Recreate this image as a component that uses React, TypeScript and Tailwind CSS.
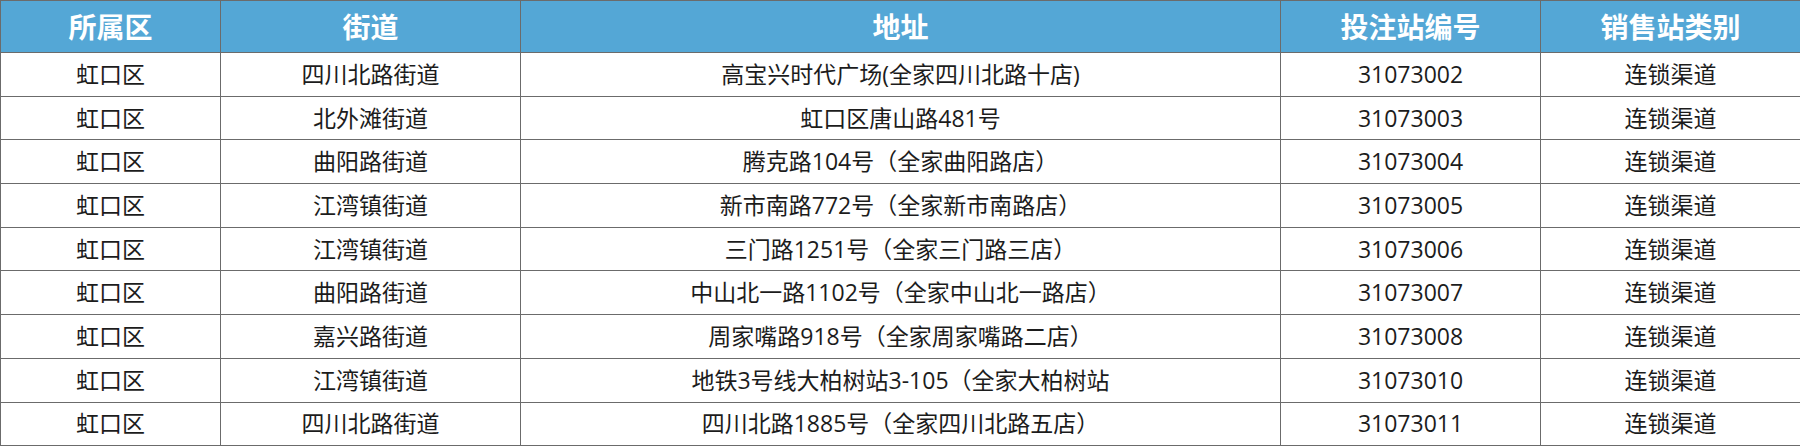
import React from 'react';

interface Store {
  district: string;
  street: string;
  address: string;
  code: string;
  type: string;
}

const stores: Store[] = [
  { district: '虹口区', street: '四川北路街道', address: '高宝兴时代广场(全家四川北路十店)', code: '31073002', type: '连锁渠道' },
  { district: '虹口区', street: '北外滩街道', address: '虹口区唐山路481号', code: '31073003', type: '连锁渠道' },
  { district: '虹口区', street: '曲阳路街道', address: '腾克路104号（全家曲阳路店）', code: '31073004', type: '连锁渠道' },
  { district: '虹口区', street: '江湾镇街道', address: '新市南路772号（全家新市南路店）', code: '31073005', type: '连锁渠道' },
  { district: '虹口区', street: '江湾镇街道', address: '三门路1251号（全家三门路三店）', code: '31073006', type: '连锁渠道' },
  { district: '虹口区', street: '曲阳路街道', address: '中山北一路1102号（全家中山北一路店）', code: '31073007', type: '连锁渠道' },
  { district: '虹口区', street: '嘉兴路街道', address: '周家嘴路918号（全家周家嘴路二店）', code: '31073008', type: '连锁渠道' },
  { district: '虹口区', street: '江湾镇街道', address: '地铁3号线大柏树站3-105（全家大柏树站', code: '31073010', type: '连锁渠道' },
  { district: '虹口区', street: '四川北路街道', address: '四川北路1885号（全家四川北路五店）', code: '31073011', type: '连锁渠道' },
];

const headers = ['所属区', '街道', '地址', '投注站编号', '销售站类别'];

export default function App() {
  return (
    <div
      className="w-[1800px] h-[448px] overflow-hidden bg-white"
      style={{ fontFamily: '"Open Sans", "Noto Sans CJK SC", sans-serif' }}
    >
      <table className="w-[1800px] table-fixed border-collapse text-center">
        <colgroup>
          <col className="w-[220px]" />
          <col className="w-[300px]" />
          <col className="w-[760px]" />
          <col className="w-[260px]" />
          <col className="w-[260px]" />
        </colgroup>
        <thead>
          <tr className="h-[52px] bg-[#54a7d6]">
            {headers.map((h) => (
              <th
                key={h}
                className="border border-[#6b6b6b] p-0 text-[28px] font-bold leading-none text-white"
              >
                {h}
              </th>
            ))}
          </tr>
        </thead>
        <tbody>
          {stores.map((s) => (
            <tr key={s.code} className="h-[43.7px] text-[23px] leading-none text-[#1c1c1c]">
              <td className="border border-[#6b6b6b] p-0">{s.district}</td>
              <td className="border border-[#6b6b6b] p-0">{s.street}</td>
              <td className="border border-[#6b6b6b] p-0 whitespace-nowrap">{s.address}</td>
              <td className="border border-[#6b6b6b] p-0">{s.code}</td>
              <td className="border border-[#6b6b6b] p-0">{s.type}</td>
            </tr>
          ))}
        </tbody>
      </table>
    </div>
  );
}
